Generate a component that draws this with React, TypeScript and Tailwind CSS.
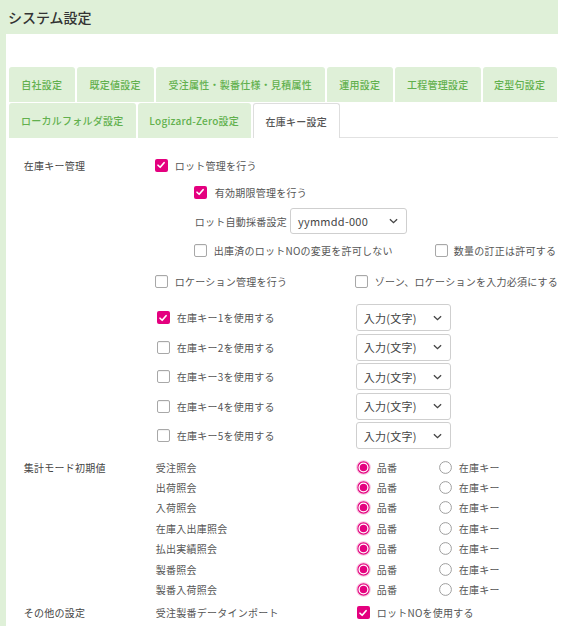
import React from "react";

const ROW1_TABS = [
  { label: "自社設定", w: "w-[66px]" },
  { label: "既定値設定", w: "w-[77px]" },
  { label: "受注属性・製番仕様・見積属性", w: "w-[169px]" },
  { label: "運用設定", w: "w-[66px]" },
  { label: "工程管理設定", w: "w-[86px]" },
  { label: "定型句設定", w: "w-[74px]" },
];

const ROW2_TABS = [
  { label: "ローカルフォルダ設定", w: "w-[127px]" },
  { label: "Logizard-Zero設定", w: "w-[113px]" },
];

const STOCK_KEYS = [1, 2, 3, 4, 5];

const INQUIRIES = [
  "受注照会",
  "出荷照会",
  "入荷照会",
  "在庫入出庫照会",
  "払出実績照会",
  "製番照会",
  "製番入荷照会",
];

function Check({ checked = false }: { checked?: boolean }) {
  if (checked) {
    return (
      <span className="w-[13px] h-[13px] rounded-[2px] bg-[#e4007f] flex items-center justify-center flex-shrink-0">
        <svg viewBox="0 0 12 12" className="w-[10px] h-[10px]">
          <path
            d="M2.4 6.3 L5 8.7 L9.7 3.3"
            stroke="white"
            strokeWidth="2"
            fill="none"
            strokeLinecap="round"
            strokeLinejoin="round"
          />
        </svg>
      </span>
    );
  }
  return (
    <span className="w-[13px] h-[13px] rounded-[2px] border border-[#a8a8a8] bg-white flex-shrink-0 shadow-[inset_0_1px_1px_rgba(0,0,0,0.06)]" />
  );
}

function Radio({ checked = false }: { checked?: boolean }) {
  return (
    <svg viewBox="0 0 16 16" className="w-[15px] h-[15px] flex-shrink-0">
      {checked ? (
        <>
          <circle cx="8" cy="8" r="7.2" fill="none" stroke="#f8c4e0" strokeWidth="1.2" />
          <circle cx="8" cy="8" r="6" fill="white" stroke="#e4007f" strokeWidth="1.2" />
          <circle cx="8" cy="8" r="4" fill="#e4007f" />
        </>
      ) : (
        <circle cx="8" cy="8" r="6.3" fill="white" stroke="#9a9a9a" strokeWidth="1" />
      )}
    </svg>
  );
}

function Chevron() {
  return (
    <svg viewBox="0 0 10 6" className="w-[9px] h-[6px]">
      <polyline points="1,1 5,4.8 9,1" fill="none" stroke="#444" strokeWidth="1.5" />
    </svg>
  );
}

function Select({ value, w, h }: { value: string; w: string; h: string }) {
  return (
    <div
      className={`${w} ${h} border border-[#cfcfcf] rounded-[3px] bg-white flex items-center justify-between pl-[7px] pr-[8px] text-[11px] text-[#444]`}
    >
      <span>{value}</span>
      <Chevron />
    </div>
  );
}

export default function App() {
  return (
    <div className="w-[561px] h-[626px] overflow-hidden bg-white font-['Noto_Sans_CJK_JP',sans-serif] text-[10px] tracking-[0.25px] text-[#555]">
      <div className="w-[558px] h-full flex flex-col">
        {/* Header */}
        <div className="h-[34px] bg-[#dff0d8] flex items-center pl-[8px] pt-[1px] text-[14px] font-medium text-[#333] tracking-normal">
          システム設定
        </div>

        <div className="flex flex-1">
          <div className="w-[7px] bg-[#dff0d8]" />
          <div className="flex-1 bg-white">
            {/* Tabs */}
            <div className="pt-[33px] pl-[3px]">
              <div className="flex gap-[2px] h-[35px]">
                {ROW1_TABS.map((t) => (
                  <div
                    key={t.label}
                    className={`${t.w} bg-[#dff0d8] rounded-t-[3px] flex items-center justify-center text-[#62b04e] font-medium`}
                  >
                    {t.label}
                  </div>
                ))}
              </div>
              <div className="flex gap-[2px] h-[35px] mt-[1px]">
                {ROW2_TABS.map((t) => (
                  <div
                    key={t.label}
                    className={`${t.w} bg-[#dff0d8] rounded-t-[3px] flex items-center justify-center text-[#62b04e] font-medium`}
                  >
                    {t.label}
                  </div>
                ))}
                <div className="w-[87px] bg-white border border-[#dedede] border-b-0 rounded-t-[3px] flex items-center justify-center text-[#555] font-medium">
                  在庫キー設定
                </div>
                <div className="flex-1 border-b border-[#e2e2e2] -ml-[2px]" />
              </div>
            </div>

            {/* Stock key management */}
            <div className="flex pt-[13px]">
              <div className="w-[148px] pl-[18px] h-[28px] flex items-center text-[#444]">在庫キー管理</div>
              <div className="flex-1 flex flex-col">
                <div className="h-[28px] pl-[1px] flex items-center gap-[7px]">
                  <Check checked />
                  <span>ロット管理を行う</span>
                </div>
                <div className="h-[26px] pl-[40px] flex items-center gap-[8px]">
                  <Check checked />
                  <span>有効期限管理を行う</span>
                </div>
                <div className="h-[32px] pl-[41px] flex items-center gap-[3px]">
                  <span>ロット自動採番設定</span>
                  <Select value="yymmdd-000" w="w-[117px]" h="h-[26px]" />
                </div>
                <div className="h-[26px] pl-[40px] flex items-center">
                  <div className="w-[241px] flex items-center gap-[7px]">
                    <Check />
                    <span>出庫済のロットNOの変更を許可しない</span>
                  </div>
                  <div className="flex items-center gap-[6px]">
                    <Check />
                    <span className="whitespace-nowrap">数量の訂正は許可する</span>
                  </div>
                </div>
                <div className="h-[36px] pl-[1px] flex items-center">
                  <div className="w-[200px] flex items-center gap-[7px]">
                    <Check />
                    <span>ロケーション管理を行う</span>
                  </div>
                  <div className="flex items-center gap-[7px]">
                    <Check />
                    <span className="whitespace-nowrap">ゾーン、ロケーションを入力必須にする</span>
                  </div>
                </div>
                <div className="h-[4px]" />
                {STOCK_KEYS.map((n) => (
                  <div key={n} className="h-[29.5px] pl-[3px] flex items-center">
                    <div className="w-[199px] flex items-center gap-[7px]">
                      <Check checked={n === 1} />
                      <span>在庫キー{n}を使用する</span>
                    </div>
                    <Select value="入力(文字)" w="w-[95px]" h="h-[27px]" />
                  </div>
                ))}
              </div>
            </div>

            {/* Aggregate mode defaults */}
            <div className="flex pt-[6.5px]">
              <div className="w-[148px] pl-[18px] h-[20.4px] flex items-center text-[#444]">集計モード初期値</div>
              <div className="flex-1 flex flex-col">
                {INQUIRIES.map((q) => (
                  <div key={q} className="h-[20.4px] pl-[2px] flex items-center">
                    <span className="w-[200px]">{q}</span>
                    <div className="w-[82px] flex items-center gap-[6px]">
                      <Radio checked />
                      <span>品番</span>
                    </div>
                    <div className="flex items-center gap-[6px]">
                      <Radio />
                      <span>在庫キー</span>
                    </div>
                  </div>
                ))}
              </div>
            </div>

            {/* Other settings */}
            <div className="flex h-[26px] items-center">
              <div className="w-[148px] pl-[18px] text-[#444]">その他の設定</div>
              <div className="pl-[2px] flex items-center">
                <span className="w-[201px]">受注製番データインポート</span>
                <div className="flex items-center gap-[7px]">
                  <Check checked />
                  <span>ロットNOを使用する</span>
                </div>
              </div>
            </div>
          </div>
        </div>
      </div>
    </div>
  );
}
